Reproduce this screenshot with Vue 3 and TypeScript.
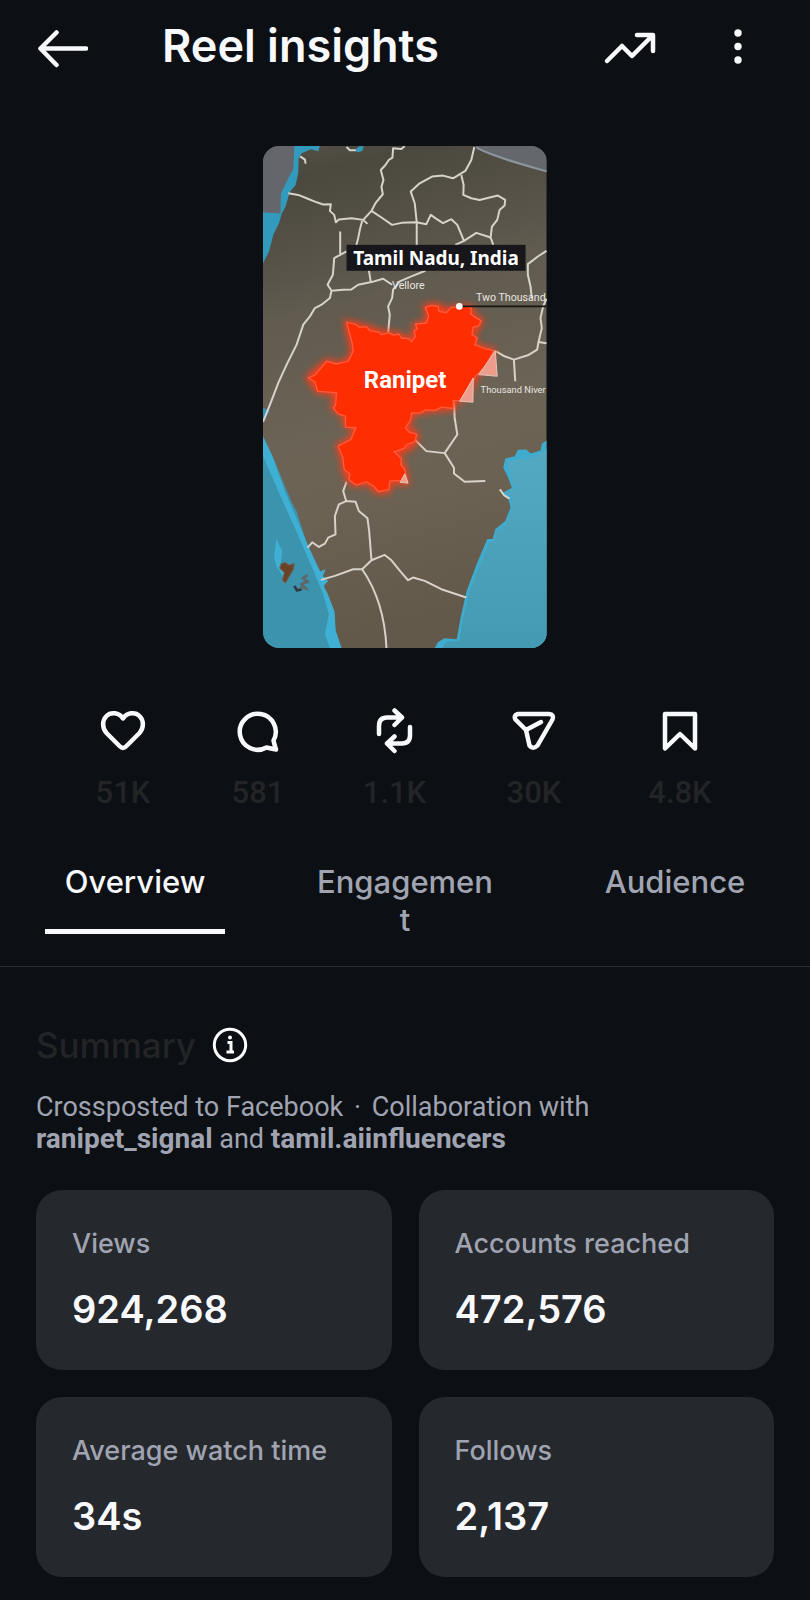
<script setup lang="ts">
import { ref } from 'vue'

interface Tab {
  id: string
  label: string
}

interface Card {
  label: string
  value: string
}

const tabs: Tab[] = [
  { id: 'overview', label: 'Overview' },
  { id: 'engagement', label: 'Engagement' },
  { id: 'audience', label: 'Audience' },
]
const activeTab = ref<string>('overview')

const cards: Card[] = [
  { label: 'Views', value: '924,268' },
  { label: 'Accounts reached', value: '472,576' },
  { label: 'Average watch time', value: '34s' },
  { label: 'Follows', value: '2,137' },
]
</script>

<template>
  <main class="screen">
    <header class="topbar">
      <button class="icon-button" type="button" aria-label="Back">
        <svg width="52" height="40" viewBox="0 0 52 40" class="line">
          <path d="M50 20.500H4.500M20.500 4.500L4.500 20.500L20.500 37" />
        </svg>
      </button>
      <h1 class="title">Reel insights</h1>
      <button class="icon-button" type="button" aria-label="Boost trend">
        <svg width="54" height="36" viewBox="0 0 54 36" class="line">
          <path d="M5 31L20 16L30 26L50 6M35 5H51V21" />
        </svg>
      </button>
      <button class="icon-button more" type="button" aria-label="More options">
        <svg width="12" height="40" viewBox="0 0 12 40" class="dots">
          <circle cx="6" cy="5" r="3.700" />
          <circle cx="6" cy="18.500" r="3.700" />
          <circle cx="6" cy="32" r="3.700" />
        </svg>
      </button>
    </header>

    <figure class="preview">
      <svg class="map" viewBox="24 33 852 1509" role="img" aria-label="Map of Tamil Nadu with Ranipet highlighted">
        <defs>
          <linearGradient id="land" x1="0" y1="0" x2="0.150" y2="1">
            <stop offset="0" stop-color="#565146" />
            <stop offset="0.080" stop-color="#4b483d" />
            <stop offset="0.200" stop-color="#545046" />
            <stop offset="0.350" stop-color="#615b50" />
            <stop offset="0.600" stop-color="#6b6355" />
            <stop offset="0.750" stop-color="#6b6253" />
            <stop offset="1" stop-color="#62594b" />
          </linearGradient>
          <linearGradient id="sea" x1="0" y1="0" x2="0" y2="1">
            <stop offset="0" stop-color="#53a9c1" />
            <stop offset="1" stop-color="#449ab2" />
          </linearGradient>
          <filter id="glow" x="-20%" y="-20%" width="140%" height="140%">
            <feGaussianBlur stdDeviation="11" />
          </filter>
        </defs>
        <rect x="24" y="33" width="852" height="1509" fill="url(#land)" />

        <!-- Northern coast -->
        <path fill="#64666b" d="M24 33H122L116 105L84 165L76 238L24 236Z" />
        <path fill="#329bbd" d="M118 33H195L190 49L168 43L140 55L131 72L130 115L122 150L104 172L92 215L80 237L72 265L55 300L42 350L24 385V232L76 236L78 175L100 130L115 103Z" />
        <path fill="#64676c" d="M660 33H876V112C800 90 720 65 665 39Z" />
        <path fill="none" stroke="#8b959c" stroke-width="6" d="M665 38C720 66 800 88 876 109" />
        <path fill="#329bbd" d="M300 46L313 34H327L322 48L308 52Z" />

        <!-- West sea -->
        <path fill="#3c93ad" d="M24 905C70 995 100 1090 125 1130L160 1240L200 1325L215 1385L240 1435L242 1490L260 1542H24Z" />
        <path fill="#3fb0d3" d="M24 905L52 965L92 1075L160 1235L196 1312L212 1305L204 1325L220 1340L206 1355L218 1378L238 1430L242 1488L260 1542H225L210 1500L222 1440L205 1380L176 1310L124 1190L72 1075L24 965Z" />
        <path fill="#3594b4" d="M24 820L44 828L24 865Z" />
        <path fill="#3fb0d3" d="M64 1215L82 1250L78 1285L90 1335L66 1300L57 1270Z" />
        <path fill="#6b4128" stroke="#6b6a62" stroke-width="3" d="M78 1288L92 1284L100 1292L118 1288L116 1305L104 1325L92 1347L82 1338L88 1315L74 1302Z" />
        <path fill="none" stroke="#2f3840" stroke-width="8" d="M118 1355L126 1368L140 1366" />
        <path fill="none" stroke="#5d6868" stroke-width="8" d="M158 1322L144 1332L156 1340L140 1350L152 1362L136 1358M162 1342L148 1346" />

        <!-- East sea -->
        <path fill="#3fabce" d="M876 918L862 928L858 948L828 957L815 945L790 946L780 966L752 972L746 1000L760 1028L772 1060L745 1075L762 1095L768 1120L752 1160L722 1185L714 1214L698 1214L668 1285L636 1370L618 1450L606 1515L570 1512L550 1524L540 1542H876Z" />
        <path fill="url(#sea)" d="M876 945L835 970L760 980L768 1020L780 1062L756 1072L772 1090L774 1125L752 1170L722 1194L718 1220L704 1226L676 1290L644 1375L626 1450L614 1520L575 1524L562 1542H876Z" />

        <!-- District borders -->
        <g class="border">
          <path d="M100 175L130 180L155 190L180 200L205 209L228 208L225 228L238 240L243 262L252 254L290 250L325 255L350 228L362 205L384 178L380 155L386 135L378 105L392 90L402 75L413 68L415 40L440 42L450 33M136 64L150 74L152 86" />
          <path d="M275 36L285 46L303 46M325 255L338 267M322 258L315 285L310 310L304 333M350 228L380 248L412 270L440 264L485 262L515 268L528 240L545 252L565 265L590 253L608 270L628 318L602 330" />
          <path d="M659 36L650 75L632 108L595 130L565 122L532 125L495 145L468 170L480 205L486 262V332M620 120L627 150L626 180L650 190L675 195L705 188L730 182L752 195L750 212L735 225L728 255L712 275L708 308L665 294L628 318M708 308L716 330" />
          <path d="M256 290L256 360L275 350M256 360L238 370L234 420L218 450L230 468L225 490L200 510L180 520L165 545L145 570L125 630L95 690L70 745L45 810L24 862M230 468L265 465L290 464L310 450L350 442L385 432L412 450M342 405L348 442M512 408L470 425L435 440L415 465L412 490L400 515L405 540L400 595" />
          <path d="M876 348L850 365L820 388V420L828 455L832 492M876 492L866 515L858 550L862 580L852 622L876 626M852 622L848 645L820 662L778 675L750 665L725 650M778 675L782 740" />
          <path d="M480 915L515 950L570 956L608 900L600 850L598 800M570 956L598 1000V1017L630 1042L692 1040" />
          <path d="M275 1042L265 1070L274 1100L252 1110L240 1145L242 1200L220 1210L210 1228L192 1238L172 1224L158 1240M274 1100L302 1102L312 1130L338 1152L343 1190L350 1278L322 1305L295 1305L240 1325L198 1337M350 1278L390 1262L410 1278L440 1315L460 1338L475 1330L510 1340L560 1365L635 1390M322 1305C360 1360 390 1430 395 1542" />
          <path d="M736 1065L748 1082L765 1093" />
        </g>

        <!-- Highlighted district -->
        <path class="halo" filter="url(#glow)" d="M275 563L335 578L372 592L432 600L470 622L482 590L482 570L515 565L522 545L512 515L550 512L575 530L595 520L650 520L655 545L680 558L668 578L655 595L662 635L715 648L685 700L660 730L650 755L620 795L596 798L596 820L540 825L510 830L470 835L468 855L455 880L486 900L478 930L450 948L420 955L445 990L455 1045L405 1040L402 1068L370 1072L335 1042L300 1050L282 1036L270 1010L264 970L250 935L288 915L303 880L272 870L268 840L235 820L245 775L190 770L160 730L215 680L245 688L280 680L295 650Z" />
        <path class="district" d="M275 563L300 568L315 578L335 576L345 588L372 592L380 600L402 594L415 602L432 598L440 610L462 612L470 622L482 605L478 590L488 582L482 568L515 565L522 545L512 518L530 512L550 515L553 530L575 534L590 518L632 515L650 520L648 538L662 548L680 558L672 574L655 578L652 600L668 610L660 630L690 642L718 648L688 700L660 728L650 755L618 798L596 798L596 822L560 818L540 828L512 826L495 836L470 835L468 855L452 880L462 892L486 900L480 922L455 930L448 942L418 952L440 972L438 990L450 1005L458 1046L428 1038L405 1040L402 1066L370 1072L358 1056L335 1042L305 1052L282 1036L285 1018L268 1005L264 970L250 935L262 928L288 915L303 880L272 878L272 845L250 838L235 820L242 812L245 775L188 770L180 742L160 730L180 722L215 680L245 688L280 680L295 650L292 625Z" />
        <path class="slope" d="M722 648L728 725L672 720L700 682Z" />
        <path class="slope" d="M656 730L655 803L615 800Z" />
        <path class="slope" d="M450 1018L460 1046L436 1044Z" />

        <!-- Labels -->
        <path stroke="#171412" stroke-width="5" d="M614 515H876" />
        <circle cx="614" cy="515" r="10" fill="#fff" />
        <rect x="275" y="330" width="538" height="78" fill="#17161b" />
        <text class="place" x="544" y="390" font-size="57">Tamil Nadu, India</text>
        <text class="place district-name" x="451" y="759" font-size="72">Ranipet</text>
        <text class="town" x="412" y="463" font-size="32">Vellore</text>
        <text class="town" x="664" y="500" font-size="32">Two Thousand</text>
        <text class="town" x="678" y="775" font-size="28">Thousand Niver</text>
      </svg>
    </figure>

    <ul class="stats">
      <li>
        <svg width="48" height="48" viewBox="0 0 48 48" class="line">
          <path d="M24 10.500C20 4.500 12 3.500 7.500 8C3 12.500 3 20 7.500 25L21 38.500Q24 41.500 27 38.500L40.500 25C45 20 45 12.500 40.500 8C36 3.500 28 4.500 24 10.500Z" />
        </svg>
        <span>51K</span>
      </li>
      <li>
        <svg width="48" height="48" viewBox="0 0 48 48" class="line">
          <path d="M39.500 32.500A18 18 0 1 0 32.500 39.500Q37 40.500 42 41.500Q40.500 37 39.500 32.500Z" />
        </svg>
        <span>581</span>
      </li>
      <li>
        <svg width="48" height="48" viewBox="0 0 48 48" class="line">
          <path d="M8 26V18Q8 9.500 16 9.500H31M23.500 2.500L31 9.500L23.500 17M39 19V27Q39 35.500 31 35.500H16M23.500 28.500L16 35.500L23.500 43" />
        </svg>
        <span>1.1K</span>
      </li>
      <li>
        <svg width="48" height="48" viewBox="0 0 48 48" class="line">
          <path d="M8 6H39Q44.500 6.500 42.500 11.500L27.500 37.500Q23 42 19.500 37.500L16 22L5.500 11.500Q3 7.500 8 6ZM16 22L31 14" />
        </svg>
        <span>30K</span>
      </li>
      <li>
        <svg width="48" height="48" viewBox="0 0 48 48" class="line">
          <path d="M9 6H39V40.500L24 26L9 40.500Z" />
        </svg>
        <span>4.8K</span>
      </li>
    </ul>

    <nav class="tabs" role="tablist" aria-label="Insight sections">
      <button
        v-for="tab in tabs"
        :key="tab.id"
        class="tab"
        :class="{ active: tab.id === activeTab }"
        type="button"
        role="tab"
        :aria-selected="tab.id === activeTab"
        @click="activeTab = tab.id"
      >
        <span class="tab-label">{{ tab.label }}</span>
      </button>
    </nav>

    <section class="summary">
      <div class="summary-head">
        <h2>Summary</h2>
        <button class="icon-button" type="button" aria-label="About this summary">
          <svg width="36" height="36" viewBox="0 0 36 36" class="info">
            <circle cx="18" cy="18" r="15.700" />
            <path d="M15.500 15.500H19V25M14.500 25H22" />
            <circle class="dot" cx="18" cy="10.500" r="2" />
          </svg>
        </button>
      </div>
      <p class="note">
        Crossposted to Facebook <span class="separator">·</span> Collaboration with<br />
        <strong>ranipet_signal</strong> and <strong>tamil.aiinfluencers</strong>
      </p>
      <div class="cards">
        <article v-for="card in cards" :key="card.label" class="card">
          <h3>{{ card.label }}</h3>
          <p>{{ card.value }}</p>
        </article>
      </div>
    </section>
  </main>
</template>

<style>
body {
  margin: 0;
  background: #0c0f14;
}
</style>

<style scoped>
.screen {
  min-height: 100vh;
  background: #0c0f14;
  color: #f8f9fc;
  font-family: Inter, 'Liberation Sans', sans-serif;
}

h1,
h2,
h3,
p,
ul,
figure {
  margin: 0;
  padding: 0;
}

button {
  padding: 0;
  border: 0;
  background: none;
  color: inherit;
  font: inherit;
  cursor: pointer;
}

svg {
  display: block;
}

.line {
  fill: none;
  stroke: #f8f9fc;
  stroke-width: 4.5;
  stroke-linecap: round;
  stroke-linejoin: round;
}

.dots {
  fill: #f8f9fc;
}

.topbar {
  display: flex;
  align-items: center;
  height: 96px;
  padding: 0 66px 0 36px;
}

.title {
  flex: 1;
  margin-left: 74px;
  padding-bottom: 4px;
  font-size: 45px;
  font-weight: 600;
  line-height: 56px;
}

.more {
  margin-left: 76px;
}

.preview {
  width: 35%;
  margin: 50px auto 0;
  border-radius: 16px;
  overflow: hidden;
}

.map {
  width: 100%;
  height: auto;
}

.border {
  fill: none;
  stroke: #d8d3ca;
  stroke-width: 6;
  stroke-linejoin: round;
}

.halo {
  fill: #ff3a18;
  stroke: #ff3a18;
  stroke-width: 14;
}

.district {
  fill: #ff2d02;
  stroke: #ff5a3c;
  stroke-width: 4;
}

.slope {
  fill: #ee9c8c;
  stroke: #e5c5b8;
  stroke-width: 3;
}

.place {
  fill: #fff;
  font-family: 'Noto Sans', sans-serif;
  font-weight: 700;
  text-anchor: middle;
}

.district-name {
  font-family: Roboto, sans-serif;
}

.town {
  fill: #e8e6e1;
  font-family: Roboto, sans-serif;
}

.stats {
  display: grid;
  grid-template-columns: 132fr 138fr 135fr 144fr 148fr;
  margin-top: 60px;
  padding: 0 56px 0 57px;
  list-style: none;
}

.stats li {
  display: flex;
  flex-direction: column;
  align-items: center;
  gap: 18px;
}

.stats span {
  color: #232426;
  font-family: Roboto, sans-serif;
  font-size: 31px;
  font-weight: 500;
  line-height: 38px;
}

.tabs {
  display: grid;
  grid-template-columns: repeat(3, 1fr);
  margin-top: 51px;
  border-bottom: 1px solid #2a2d31;
}

.tab {
  display: flex;
  padding: 0 45px 32px;
  color: #a0a4b1;
  font-size: 31px;
  font-weight: 500;
  line-height: 38px;
}

.tab-label {
  flex: 1;
  min-width: 0;
  height: 71px;
  overflow-wrap: anywhere;
}

.tab.active {
  color: #f8f9fc;
}

.active .tab-label {
  height: 66px;
  border-bottom: 5px solid #f8f9fc;
}

.summary {
  padding: 54px 36px 23px;
}

.summary-head {
  display: flex;
  align-items: center;
  gap: 16px;
}

.summary-head h2 {
  color: #232426;
  font-size: 35px;
  font-weight: 500;
  line-height: 48px;
}

.info {
  fill: none;
  stroke: #fff;
  stroke-width: 3;
}

.info .dot {
  fill: #fff;
  stroke: none;
}

.note {
  margin-top: 22px;
  color: #a0a4b1;
  font-family: Roboto, sans-serif;
  font-size: 27px;
  line-height: 32px;
}

.note strong {
  font-size: 28px;
}

.separator {
  padding: 0 4px;
}

.cards {
  display: grid;
  grid-template-columns: 1fr 1fr;
  gap: 27px;
  margin-top: 35px;
}

.card {
  padding: 36px;
  border-radius: 26px;
  background: #25282d;
}

.card h3 {
  color: #a0a4b1;
  font-size: 27px;
  font-weight: 500;
  line-height: 36px;
}

.card p {
  margin-top: 22px;
  font-size: 38px;
  font-weight: 600;
  line-height: 50px;
}
</style>
